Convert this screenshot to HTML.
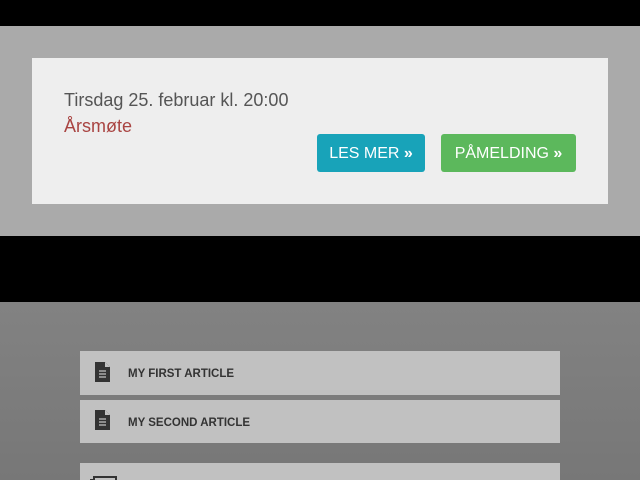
<!DOCTYPE html>
<html><head><meta charset="utf-8"><style>
*{margin:0;padding:0;box-sizing:border-box}
html,body{width:640px;height:480px;overflow:hidden}
body{background:#000;font-family:"Liberation Sans","DejaVu Sans",sans-serif;position:relative}
.band{position:absolute;left:0;top:26px;width:640px;height:210px;background:#aaaaaa}
.card{position:absolute;left:32px;top:58px;width:576px;height:146px;background:#eeeeee}
.date{position:absolute;left:64px;top:90px;font-size:18px;color:#555}
.title{position:absolute;left:64px;top:116px;font-size:18px;color:#a94442}
.btn{position:absolute;top:134px;height:38px;border-radius:3px;color:#fff;font-size:16px;line-height:40px;text-align:center}
.b1{left:317px;width:108px;background:#18a3b9}
.b2{left:441px;width:135px;background:#5cb85c}
.low{position:absolute;left:0;top:302px;width:640px;height:178px;background:linear-gradient(#828282,#777)}
.row{position:absolute;left:80px;width:480px;background:#c1c1c1;overflow:hidden}
.row span{position:absolute;left:48px;font-size:11.5px;font-weight:bold;color:#333}
.row svg{position:absolute;left:15px}
</style></head><body>
<div class="band"></div>
<div class="card"></div>
<div class="date">Tirsdag 25. februar kl. 20:00</div>
<div class="title">Årsmøte</div>
<div class="btn b1">LES MER <b>»</b></div>
<div class="btn b2">PÅMELDING <b>»</b></div>
<div class="low"></div>
<div class="row" style="top:351px;height:44px"><svg style="top:11px" width="16" height="20" viewBox="0 0 16 20"><path d="M0 0H10L15 5V20H0Z" fill="#333"/><path d="M10 0V5H15" fill="#c1c1c1"/><path d="M4 9H11M4 12H11M4 15H11" stroke="#c1c1c1" stroke-width="1.2"/></svg><span style="top:17px">MY FIRST ARTICLE</span></div>
<div class="row" style="top:400px;height:43px"><svg style="top:10px" width="16" height="20" viewBox="0 0 16 20"><path d="M0 0H10L15 5V20H0Z" fill="#333"/><path d="M10 0V5H15" fill="#c1c1c1"/><path d="M4 9H11M4 12H11M4 15H11" stroke="#c1c1c1" stroke-width="1.2"/></svg><span style="top:17px">MY SECOND ARTICLE</span></div>
<div class="row" style="top:463px;height:17px"><svg style="left:10px;top:13px" width="30" height="10"><rect x="4" y="1" width="22" height="12" fill="none" stroke="#333" stroke-width="2"/><rect x="0" y="3" width="3" height="8" fill="#333"/></svg></div>
</body></html>
